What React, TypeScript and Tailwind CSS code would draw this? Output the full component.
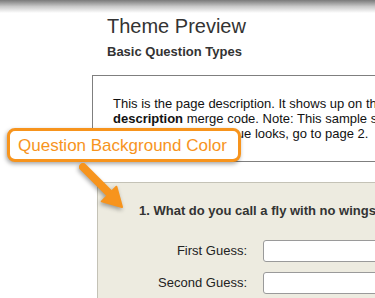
// Theme preview with a "Question Background Color" callout

const font = { fontFamily: '"Liberation Sans", Arial, Helvetica, sans-serif' };

const Callout = () => (
  <>
    <div className="absolute left-[7px] top-[128px] flex h-[34px] w-[234px] items-center rounded-[8px] border-[3px] border-[#f7941d] bg-white pl-[8px] shadow-[-1px_2px_4px_rgba(0,0,0,0.35)]">
      <span className="text-[17px] leading-none text-[#f7941d]">Question Background Color</span>
    </div>
    {/* arrow pointing down-right into the question box */}
    <svg
      className="absolute left-0 top-0"
      width="375"
      height="298"
      viewBox="0 0 375 298"
      style={{ filter: 'drop-shadow(-1px 2px 2px rgba(0,0,0,0.35))' }}
    >
      <line x1="83" y1="167" x2="111" y2="195" stroke="#f7941d" strokeWidth="8" strokeLinecap="round" />
      <polygon points="122,207 116.4,186.8 101.8,201.4" fill="#f7941d" stroke="#f7941d" strokeWidth="2" strokeLinejoin="round" />
    </svg>
  </>
);

const GuessRow = ({ label }: { label: string }) => (
  <div className="flex h-[22px] items-center">
    <span className="w-[150px] shrink-0 pr-px text-right text-[13px] text-[#222]">{label}</span>
    <div className="ml-[15px] h-[22px] w-[200px] shrink-0 rounded-[3px] border border-[#9a9a9a] bg-white" />
  </div>
);

export default function App() {
  return (
    <div className="relative h-[298px] w-[375px] overflow-hidden bg-white" style={font}>
      {/* toolbar shadow */}
      <div className="h-[13px] bg-gradient-to-b from-[#7a7a7a] via-[#c9c9c9] to-white" />

      <div className="ml-[92px] w-[320px]">
        <div className="pl-[15px] pt-px">
          <h1 className="text-[20px] leading-[24px] text-[#333]">Theme Preview</h1>
          <h2 className="mt-[6px] text-[13px] font-bold leading-[16px] text-[#333]">Basic Question Types</h2>
        </div>

        <div className="mt-[15px] border-y border-l border-[#7f7f7f] pb-[20px] pl-[20px] pt-[20px] text-[13px] leading-[15px] text-[#111]">
          <p className="whitespace-nowrap">This is the page description. It shows up on the top of every page.</p>
          <p className="whitespace-nowrap">
            <b>description</b> merge code. Note: This sample survey has two pages.
          </p>
          <p className="whitespace-nowrap">To see a sample's value looks, go to page 2.</p>
        </div>

        <div className="ml-[5px] mt-[20px] h-[200px] border-l border-t border-[#c4c2b6] bg-[#edebe0] pt-[20px]">
          <p className="whitespace-nowrap pl-[41px] text-[13px] font-bold leading-[15px] text-[#333]">
            1. What do you call a fly with no wings?
          </p>
          <div className="mt-[22px] flex flex-col gap-[10px]">
            <GuessRow label="First Guess:" />
            <GuessRow label="Second Guess:" />
          </div>
        </div>
      </div>

      <Callout />
    </div>
  );
}
